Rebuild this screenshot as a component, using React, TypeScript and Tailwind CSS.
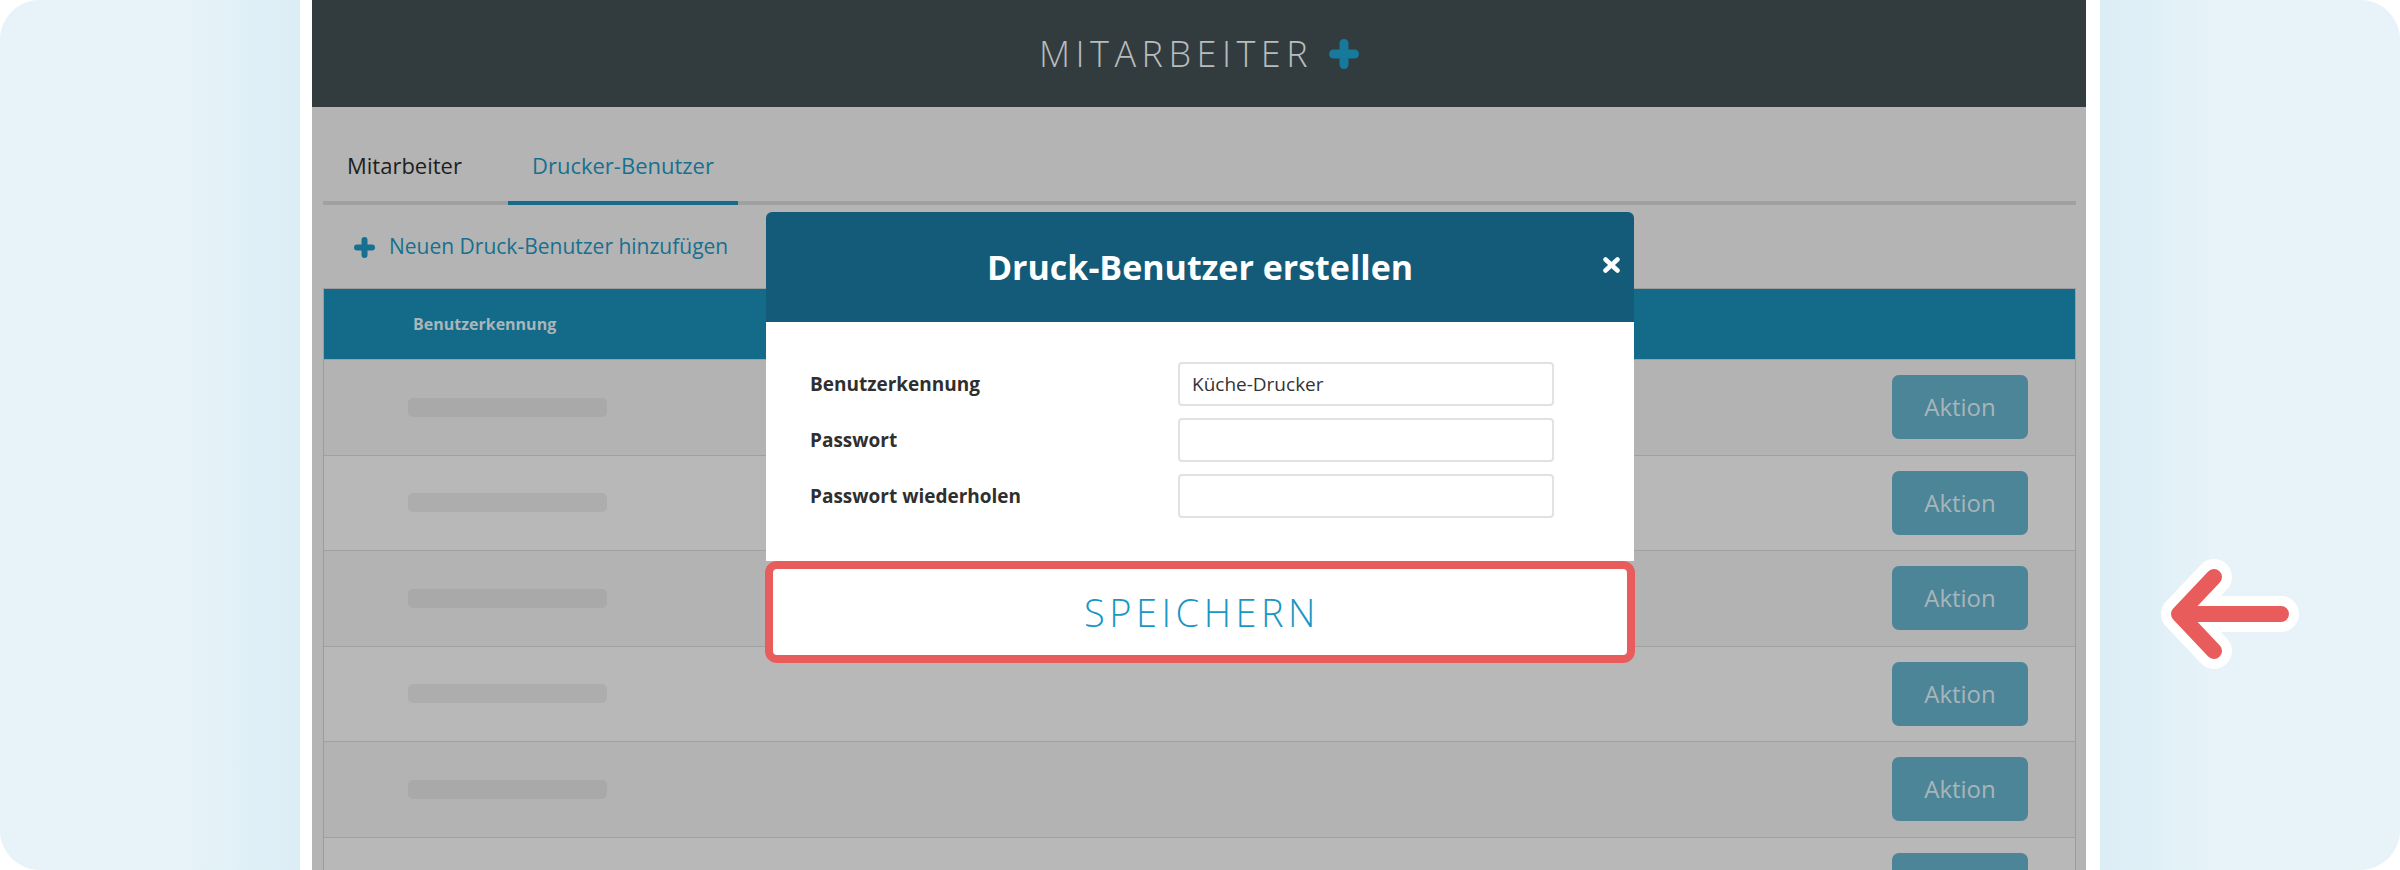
import React from 'react';

const rows = [0, 1, 2, 3, 4, 5];

const PlusIcon: React.FC<{ size: number; bar: number; color: string }> = ({ size, bar, color }) => (
  <svg width={size} height={size} viewBox={`0 0 ${size} ${size}`}>
    <line x1={size / 2} y1={bar / 2} x2={size / 2} y2={size - bar / 2} stroke={color} strokeWidth={bar} strokeLinecap="round" />
    <line x1={bar / 2} y1={size / 2} x2={size - bar / 2} y2={size / 2} stroke={color} strokeWidth={bar} strokeLinecap="round" />
  </svg>
);

const App: React.FC = () => {
  return (
    <div className="w-[2400px] h-[870px] bg-white font-['Open_Sans',sans-serif]">
      <div className="h-full rounded-[40px] overflow-hidden flex bg-[#e7f3f9]">
        {/* Left margin */}
        <div className="w-[300px] bg-linear-to-r from-[#e7f3f9] from-60% to-[#dbedf5]" />

        {/* Screenshot frame */}
        <div className="w-[1800px] h-full bg-white pl-[12px] pr-[14px]">
          <div className="relative h-full bg-[#b4b4b4] overflow-hidden flex flex-col">
            {/* Header */}
            <div className="h-[107px] shrink-0 bg-[#323c3f] flex items-center justify-center gap-[16px]">
              <span className="text-[36px] font-light tracking-[5.5px] text-[#b8bcbd] leading-none">MITARBEITER</span>
              <PlusIcon size={30} bar={9} color="#17799b" />
            </div>

            {/* Content */}
            <div className="pl-[11px] pr-[10px] flex flex-col">
              {/* Tabs */}
              <div className="flex gap-[22px] border-b-4 border-[#a0a0a0]">
                <div className="px-6 pt-[42px] pb-[20px] leading-[32px] text-[22px] text-[#1e1e1e] -mb-[4px] border-b-4 border-transparent">
                  Mitarbeiter
                </div>
                <div className="px-6 pt-[42px] pb-[20px] leading-[32px] text-[22px] text-[#17708f] -mb-[4px] border-b-4 border-[#146b8a]">
                  Drucker-Benutzer
                </div>
              </div>

              {/* Add link */}
              <div className="mt-[26px] h-[32px] pl-[31px] flex items-center gap-[14px] text-[21px] text-[#17708f]">
                <PlusIcon size={21} bar={6} color="#17708f" />
                <span>Neuen Druck-Benutzer hinzufügen</span>
              </div>

              {/* Table */}
              <div className="mt-[25px] border-l border-r border-t border-[#9c9c9c]">
                <div className="h-[70px] bg-[#146b89] flex items-center pl-[89px] text-[16px] font-bold text-[#a9b6ba]">
                  Benutzerkennung
                </div>
                {rows.map((r) => (
                  <div
                    key={r}
                    className={`h-[95.5px] border-t border-[#a0a0a0] flex items-center justify-between pl-[84px] pr-[47px] ${
                      r % 2 === 0 ? 'bg-[#b3b3b3]' : 'bg-[#b8b8b8]'
                    }`}
                  >
                    <div className={`w-[199px] h-[19px] rounded-[5px] ${r % 2 === 0 ? 'bg-[#a9a9a9]' : 'bg-[#adadad]'}`} />
                    <div className="w-[136px] h-[64px] rounded-[7px] bg-[#4d8598] flex items-center justify-center text-[24px] text-[#a7b5ba]">
                      Aktion
                    </div>
                  </div>
                ))}
              </div>
            </div>

            {/* Modal */}
            <div className="absolute left-[454px] top-[212px] w-[868px] flex flex-col">
              <div className="relative h-[110px] rounded-t-[6px] bg-[#135b78] flex items-center justify-center">
                <span className="text-[34px] font-bold text-white">Druck-Benutzer erstellen</span>
                <svg className="absolute right-[14px] top-[45px]" width="17" height="16" viewBox="0 0 17 16">
                  <line x1="2.5" y1="2.5" x2="14.5" y2="13.5" stroke="white" strokeWidth="4.5" strokeLinecap="round" />
                  <line x1="14.5" y1="2.5" x2="2.5" y2="13.5" stroke="white" strokeWidth="4.5" strokeLinecap="round" />
                </svg>
              </div>
              <div className="bg-white pl-[44px] pt-[40px] pb-[43px] flex flex-col gap-[12px]">
                {[
                  { label: 'Benutzerkennung', value: 'Küche-Drucker' },
                  { label: 'Passwort', value: '' },
                  { label: 'Passwort wiederholen', value: '' },
                ].map((f) => (
                  <div key={f.label} className="flex items-center">
                    <div className="w-[368px] text-[19px] font-bold text-[#2f2f2f]">{f.label}</div>
                    <div className="w-[376px] h-[44px] rounded-[4px] border-2 border-[#e2e2e2] flex items-center pl-[12px] text-[19px] text-[#333]">
                      {f.value}
                    </div>
                  </div>
                ))}
              </div>
              <div className="-mx-[1px] h-[102px] rounded-[12px] border-8 border-[#e85c5c] bg-white flex items-center justify-center">
                <span className="text-[38px] font-light tracking-[4.5px] text-[#1a96c4] pl-[4px]">SPEICHERN</span>
              </div>
            </div>
          </div>
        </div>

        {/* Right margin with arrow */}
        <div className="flex-1 bg-linear-to-l from-[#e7f3f9] from-60% to-[#dbedf5] pt-[550px] pl-[50px]">
          <svg width="160" height="130" viewBox="0 0 160 130">
            <g fill="none" strokeLinecap="round" strokeLinejoin="round">
              <path d="M64 27 L29 64 L64 101 M29 64 L131 64" stroke="white" strokeWidth="36" />
              <path d="M64 27 L29 64 L64 101 M29 64 L131 64" stroke="#e85c5c" strokeWidth="16" />
            </g>
          </svg>
        </div>
      </div>
    </div>
  );
};

export default App;
